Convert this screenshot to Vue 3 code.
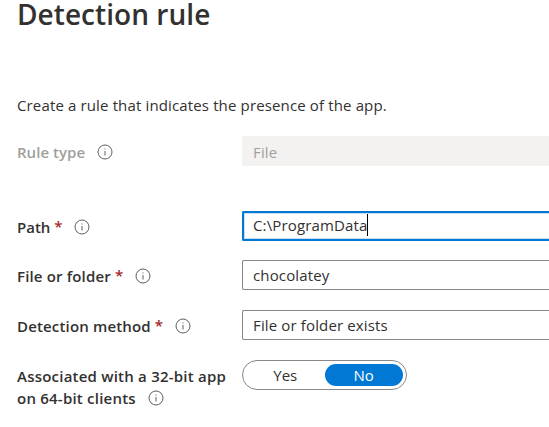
<script setup>
import { ref } from 'vue'

const fields = [
  { id: 'type', label: 'Rule type', value: 'File', state: 'disabled' },
  { id: 'path', label: 'Path', value: 'C:\\ProgramData', state: 'focused', required: true },
  { id: 'name', label: 'File or folder', value: 'chocolatey', state: '', required: true },
  { id: 'method', label: 'Detection method', value: 'File or folder exists', state: '', required: true },
]
const associated = ref('No')
</script>

<template>
  <main class="panel">
    <h1><span>Detection rule</span></h1>
    <p class="intro"><span>Create a rule that indicates the presence of the app.</span></p>
    <div v-for="f in fields" :key="f.id" class="row" :class="[f.id, f.state]">
      <div class="label">
        <span class="text">{{ f.label }}</span>
        <span v-if="f.required" class="star">*</span>
        <svg class="info" viewBox="0 0 16 16">
          <circle cx="8" cy="8" r="7" />
          <path d="M8 7v4.5M8 4.5v1" />
        </svg>
      </div>
      <div class="field">
        <span class="value">{{ f.value }}</span>
        <i v-if="f.state === 'focused'" class="caret"></i>
      </div>
    </div>
    <div class="row assoc">
      <div class="label two">
        <span class="text line1">Associated with a 32-bit app</span>
        <div class="second">
          <span class="text line2">on 64-bit clients</span>
          <svg class="info" viewBox="0 0 16 16">
            <circle cx="8" cy="8" r="7" />
            <path d="M8 7v4.5M8 4.5v1" />
          </svg>
        </div>
      </div>
      <div class="toggle">
        <span
          v-for="o in ['Yes', 'No']"
          :key="o"
          class="option"
          :class="{ on: associated === o }"
          @click="associated = o"
        >{{ o }}</span>
      </div>
    </div>
  </main>
</template>

<style>
body {
  background: #fff;
  overflow: hidden;
}
</style>

<style scoped>
.panel {
  box-sizing: border-box;
  width: 549px;
  height: 427px;
  padding-left: 17px;
  font-family: "Open Sans", "Noto Sans", sans-serif;
  font-size: 15px;
  color: #323130;
  white-space: nowrap;
}
h1 {
  margin: 0;
  height: 94px;
  font-size: 28px;
  font-weight: 600;
  line-height: 28px;
  letter-spacing: 0.05px;
}
.intro {
  margin: 0 0 20px;
  height: 22px;
  line-height: 22px;
  letter-spacing: 0.14px;
}
.row {
  display: flex;
  height: 30px;
  margin-bottom: 20px;
}
.row.type {
  margin-bottom: 45px;
}
.row.path {
  margin-bottom: 19px;
}
.label {
  display: flex;
  align-items: center;
  flex: none;
  width: 225px;
  padding-top: 2px;
  box-sizing: border-box;
  font-weight: 600;
  line-height: 22px;
  letter-spacing: 0.16px;
}
.type .label {
  letter-spacing: 0.04px;
}
.path .label {
  padding-top: 1px;
  letter-spacing: -0.02px;
}
.star {
  width: 8px;
  margin: -2px 0 0 4px;
  color: #a4262c;
}
.info {
  flex: none;
  width: 16px;
  height: 16px;
  margin-left: 12px;
  fill: none;
  stroke: #605e5c;
  stroke-width: 1;
}
.field {
  display: flex;
  align-items: center;
  flex: 1;
  box-sizing: border-box;
  height: 30px;
  padding-left: 10px;
  border: 1px solid #8a8886;
  border-right: 0;
  border-radius: 2px 0 0 2px;
  letter-spacing: 0.14px;
}
.disabled .label,
.disabled .value {
  color: #a19f9d;
}
.disabled .value {
  padding-top: 2px;
}
.disabled .field {
  background: #f3f2f1;
  border-color: #f3f2f1;
}
.focused .field {
  padding-left: 9px;
  border: 2px solid #0078d4;
  border-right: 0;
  box-shadow: inset 0 1px #c7e0f4, inset 0 -1px #c7e0f4, inset 1px 0 #c7e0f4;
}
.focused .value {
  margin-top: -2px;
}
.caret {
  width: 1px;
  height: 22px;
  margin-top: -3px;
  background: #000;
}
.label.two {
  flex-direction: column;
  align-items: flex-start;
  padding-top: 5px;
  letter-spacing: 0.22px;
}
.second {
  display: flex;
  align-items: center;
}
.toggle {
  display: flex;
  box-sizing: border-box;
  width: 165px;
  height: 30px;
  padding: 3px;
  border: 1px solid #8a8886;
  border-radius: 15px;
}
.option {
  width: 79px;
  height: 22px;
  border-radius: 11px;
  line-height: 22px;
  text-align: center;
}
.on {
  background: #0078d4;
  color: #fff;
}
</style>
